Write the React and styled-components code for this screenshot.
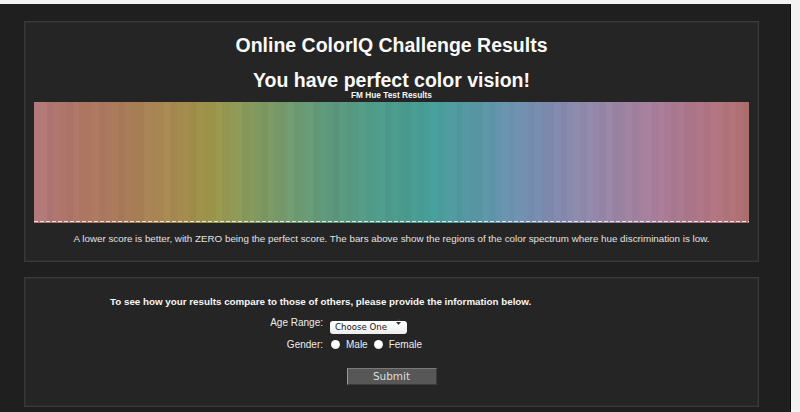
import React from "react";
import styled, { createGlobalStyle } from "styled-components";

const GlobalStyle = createGlobalStyle`
  body {
    margin: 0;
    background: #f2f2f2;
    font-family: "Liberation Sans", Arial, sans-serif;
  }
`;

const Page = styled.div`
  margin-top: 4px;
  width: 791px;
  height: 408px;
  box-sizing: border-box;
  padding: 17px 0 0 24px;
  background: #1f1f1f;
  border-right: 1px solid #0e0e0e;
  display: flex;
  flex-direction: column;
  gap: 15px;
  overflow: hidden;
`;

const Panel = styled.section`
  width: 735px;
  box-sizing: border-box;
  background: #252525;
  border: 1px solid #3a3a3a;
  box-shadow: inset 0 0 0 1px #2c2c2c;
  display: flex;
  flex-direction: column;
  align-items: ${(p) => (p.$left ? "flex-start" : "center")};
  padding: ${(p) => p.$pad};
`;

const Title = styled.h1`
  margin: 0;
  font-size: 19.5px;
  font-weight: bold;
  color: #fafafa;
  margin-top: ${(p) => p.$top || "0"};
  line-height: ${(p) => p.$lh || "22px"};
`;

const ChartLabel = styled.div`
  font-size: 8.3px;
  line-height: 10px;
  font-weight: bold;
  color: #f4f4f4;
`;

const Spectrum = styled.svg`
  display: block;
  width: 715px;
  height: 121px;
  margin-top: 2px;
`;

const Caption = styled.p`
  margin: 9px 0 0;
  font-size: 9.8px;
  line-height: 13px;
  color: #e2e2e2;
`;

const Intro = styled.p`
  margin: 0 0 0 85px;
  font-size: 9.8px;
  line-height: 12px;
  font-weight: bold;
  color: #f6f6f6;
`;

const Row = styled.div`
  display: grid;
  grid-template-columns: 298px auto;
  column-gap: 7px;
  align-items: center;
  height: 13px;
  margin-top: ${(p) => p.$top};
`;

const Label = styled.span`
  text-align: right;
  font-size: 10px;
  color: #ececec;
`;

const SelectWrap = styled.div`
  position: relative;
  width: 77px;
  height: 13px;
`;

const Select = styled.select`
  appearance: none;
  -webkit-appearance: none;
  width: 77px;
  height: 13px;
  margin: 0;
  padding: 0 0 0 5px;
  border: none;
  border-radius: 3px;
  background: linear-gradient(#ffffff, #ececec);
  font-family: "DejaVu Sans", sans-serif;
  font-size: 8.6px;
  line-height: 13px;
  color: #222;
`;

const Arrows = styled.span`
  position: absolute;
  right: 6px;
  top: 2px;
  display: flex;
  flex-direction: column;
  gap: 1px;
  pointer-events: none;
`;

const Radios = styled.div`
  display: flex;
  align-items: center;
  gap: 5px;
  font-size: 10px;
  color: #ececec;
`;

const Radio = styled.input`
  appearance: none;
  -webkit-appearance: none;
  margin: 0 1px;
  width: 9px;
  height: 9px;
  border-radius: 50%;
  border: none;
  background: radial-gradient(circle at 50% 40%, #ffffff 40%, #d8d8d8 100%);
`;

const ButtonRow = styled.div`
  align-self: stretch;
  display: flex;
  justify-content: center;
  margin-top: 17px;
`;

const Button = styled.button`
  width: 90px;
  height: 17px;
  padding: 0;
  background: #575757;
  border: 1px solid #3a3a3a;
  border-left-color: #9a9a9a;
  border-top-color: #7a7a7a;
  font-family: "DejaVu Sans", sans-serif;
  font-size: 10.5px;
  color: #dedede;
  line-height: 15px;
`;

const stops = [
  [0, "#b47a7c"],
  [0.064, "#ad7463"],
  [0.134, "#a97d58"],
  [0.204, "#a68a4e"],
  [0.246, "#9c9548"],
  [0.315, "#819a62"],
  [0.399, "#62997a"],
  [0.483, "#4f9b8a"],
  [0.554, "#469d98"],
  [0.624, "#5a97a6"],
  [0.68, "#7090b0"],
  [0.736, "#8489ae"],
  [0.806, "#9a86a6"],
  [0.876, "#a87c98"],
  [0.945, "#b07483"],
  [1, "#ae706e"],
];

const hex = (h) => [1, 3, 5].map((i) => parseInt(h.slice(i, i + 2), 16));

function colorAt(t, jitter) {
  let i = 0;
  while (i < stops.length - 2 && t > stops[i + 1][0]) i++;
  const [t0, c0] = stops[i];
  const [t1, c1] = stops[i + 1];
  const f = Math.min(1, Math.max(0, (t - t0) / (t1 - t0)));
  const a = hex(c0);
  const b = hex(c1);
  const rgb = a.map((v, k) => Math.round((v + (b[k] - v) * f) * jitter));
  return `rgb(${rgb.map((v) => Math.min(255, v)).join(",")})`;
}

const BARS = 110;
const W = 715;
const bars = Array.from({ length: BARS }, (_, i) => {
  const t = (i + 0.5) / BARS;
  const j = 1 + 0.018 * Math.sin(i * 2.3) + 0.012 * Math.sin(i * 5.7);
  return { x: (i * W) / BARS, w: W / BARS + 0.5, fill: colorAt(t, j) };
});

const ArrowIcon = ({ up }) => (
  <svg width="5" height="3" viewBox="0 0 5 3">
    <path d={up ? "M0 3 L2.5 0 L5 3 Z" : "M0 0 L2.5 3 L5 0 Z"} fill="#333" />
  </svg>
);

export default function App() {
  return (
    <>
      <GlobalStyle />
      <Page>
        <Panel $pad="12px 9px 16px">
          <Title>Online ColorIQ Challenge Results</Title>
          <Title $top="14px" $lh="20px">
            You have perfect color vision!
          </Title>
          <ChartLabel>FM Hue Test Results</ChartLabel>
          <Spectrum viewBox="0 0 715 121" preserveAspectRatio="none">
            {bars.map((b, i) => (
              <rect key={i} x={b.x} y="0" width={b.w} height="121" fill={b.fill} />
            ))}
            <line
              x1="0"
              y1="119.5"
              x2="715"
              y2="119.5"
              stroke="#e4e4e4"
              strokeWidth="1"
              strokeDasharray="4 2"
            />
          </Spectrum>
          <Caption>
            A lower score is better, with ZERO being the perfect score. The bars above show the
            regions of the color spectrum where hue discrimination is low.
          </Caption>
        </Panel>
        <Panel $left $pad="18px 0 21px">
          <Intro>
            To see how your results compare to those of others, please provide the information
            below.
          </Intro>
          <Row $top="8px">
            <Label>Age Range:</Label>
            <SelectWrap>
              <Select defaultValue="">
                <option value="">Choose One</option>
                <option>Under 20</option>
                <option>20-29</option>
                <option>30-39</option>
                <option>40-49</option>
                <option>50+</option>
              </Select>
              <Arrows>
                <ArrowIcon up />
                <ArrowIcon />
              </Arrows>
            </SelectWrap>
          </Row>
          <Row $top="9px">
            <Label>Gender:</Label>
            <Radios>
              <Radio type="radio" name="gender" />
              <span>Male</span>
              <Radio type="radio" name="gender" />
              <span>Female</span>
            </Radios>
          </Row>
          <ButtonRow>
            <Button type="button">Submit</Button>
          </ButtonRow>
        </Panel>
      </Page>
    </>
  );
}
